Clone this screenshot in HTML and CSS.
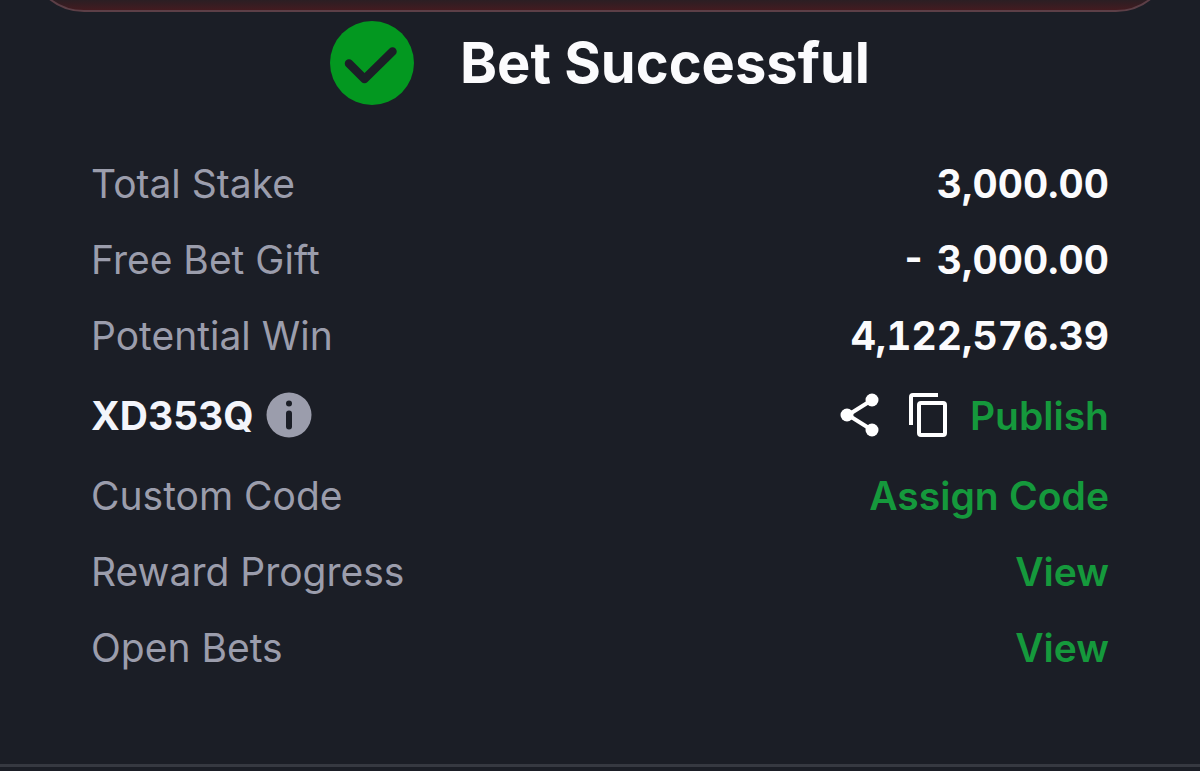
FILE: index.html
```html
<!DOCTYPE html>
<html lang="en">
<head>
    <meta charset="UTF-8">
    <meta name="viewport" content="width=device-width, initial-scale=1.0">
    <title>Bet Successful</title>
    <link rel="stylesheet" href="styles.css">
</head>
<body>
    <div class="banner"></div>
    <main class="receipt">
        <header class="title">
            <svg class="check" viewBox="0 0 84 84" aria-hidden="true">
                <circle cx="42" cy="42" r="42" fill="#039820"/>
                <path d="M19 42.500L34.500 58L62.500 30.500" fill="none" stroke="#1b1e26" stroke-width="8.500" stroke-linecap="round" stroke-linejoin="round"/>
            </svg>
            <h1>Bet Successful</h1>
        </header>
        <dl class="details">
            <div class="row">
                <dt>Total Stake</dt>
                <dd>3,000.00</dd>
            </div>
            <div class="row">
                <dt>Free Bet Gift</dt>
                <dd>- 3,000.00</dd>
            </div>
            <div class="row">
                <dt>Potential Win</dt>
                <dd>4,122,576.39</dd>
            </div>
            <div class="row code-row">
                <dt class="code">
                    XD353Q
                    <button class="icon-btn" type="button" aria-label="About booking code">
                        <svg width="46" height="46" viewBox="0 0 46 46">
                            <circle cx="23" cy="23" r="22.500" fill="#9b9dac"/>
                            <circle cx="23" cy="11.500" r="3" fill="#1b1e26"/>
                            <path d="M23 21.500V34.500" stroke="#1b1e26" stroke-width="6" stroke-linecap="round"/>
                        </svg>
                    </button>
                </dt>
                <dd class="actions">
                    <button class="icon-btn" type="button" aria-label="Share">
                        <svg width="40" height="44" viewBox="0 0 40 44">
                            <path d="M32 7L8 22L32 37" fill="none" stroke="#fff" stroke-width="4"/>
                            <circle cx="32" cy="7" r="6.500" fill="#fff"/>
                            <circle cx="7" cy="22" r="6.500" fill="#fff"/>
                            <circle cx="32" cy="37" r="6.500" fill="#fff"/>
                        </svg>
                    </button>
                    <button class="icon-btn copy" type="button" aria-label="Copy">
                        <svg width="40" height="44" viewBox="0 0 40 44">
                            <path d="M3 32V4Q3 2 5 2H30" fill="none" stroke="#fff" stroke-width="4"/>
                            <rect x="11" y="10" width="26" height="32" rx="2" fill="none" stroke="#fff" stroke-width="4"/>
                        </svg>
                    </button>
                    <a href="#">Publish</a>
                </dd>
            </div>
            <div class="row">
                <dt>Custom Code</dt>
                <dd><a href="#">Assign Code</a></dd>
            </div>
            <div class="row">
                <dt>Reward Progress</dt>
                <dd><a href="#">View</a></dd>
            </div>
            <div class="row">
                <dt>Open Bets</dt>
                <dd><a href="#">View</a></dd>
            </div>
        </dl>
    </main>
</body>
</html>
```

FILE: styles.css
```css
* {
    box-sizing: border-box;
}
body {
    margin: 0;
    background-color: #1b1e26;
    color: #fbfbfd;
    font-family: Inter, sans-serif;
    font-size: 39px;
}
/* bottom edge of the card above */
.banner {
    height: 12px;
    margin: 0 28px;
    overflow: hidden;
    position: relative;
}
.banner::before {
    content: "";
    position: absolute;
    left: 0;
    right: 0;
    bottom: 0;
    height: 120px;
    border: 2px solid #5c3f47;
    border-radius: 56px;
    background: linear-gradient(#261f24 90%, #431b20);
}
.receipt {
    padding: 9px 91px 79px;
    border-bottom: 3px solid #363941;
}
.title {
    display: flex;
    justify-content: center;
    align-items: center;
    gap: 46px;
    margin-bottom: 40px;
}
.check {
    width: 84px;
    height: 84px;
}
h1 {
    margin: 0;
    font-size: 56px;
    font-weight: 700;
    line-height: 84px;
}
.details {
    margin: 0;
}
.row {
    display: flex;
    justify-content: space-between;
    align-items: center;
    height: 76px;
}
.code-row {
    height: 84px;
}
dt {
    color: #9b9dac;
}
dd {
    margin: 0;
    font-weight: 700;
    font-variant-numeric: tabular-nums;
}
.code,
.actions {
    display: flex;
    align-items: center;
}
.code {
    color: #f3f5fb;
    font-weight: 700;
    gap: 12px;
}
.actions {
    gap: 22px;
}
.copy {
    margin-left: 6px;
}
.icon-btn {
    display: flex;
    padding: 0;
    border: none;
    background: none;
    cursor: pointer;
}
a {
    color: #15993c;
    font-weight: 600;
    text-decoration: none;
}
a:hover {
    text-decoration: underline;
}
```
